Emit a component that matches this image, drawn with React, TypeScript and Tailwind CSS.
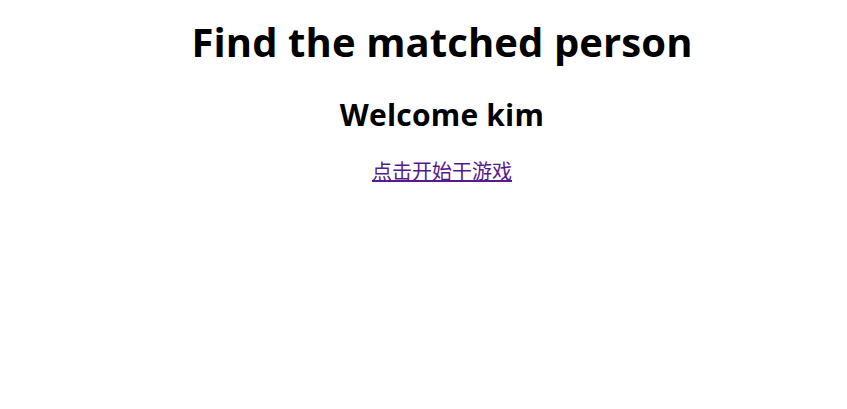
export default function App() {
  return (
    <main
      className="min-h-screen bg-white text-black text-center pt-[15px] pl-[37px]"
      style={{ fontFamily: '"Open Sans", "Noto Sans CJK SC", sans-serif' }}
    >
      <h1 className="text-[40px] font-bold leading-[53px] tracking-[0.1px]">Find the matched person</h1>

      <h2 className="mt-[27px] text-[30px] font-bold leading-[40px] tracking-[0.2px]">Welcome kim</h2>

      <p className="mt-[23px] text-[20px] leading-[27px]">
        <a href="#" className="underline text-[#551a8b]">
          点击开始干游戏
        </a>
      </p>
    </main>
  )
}
